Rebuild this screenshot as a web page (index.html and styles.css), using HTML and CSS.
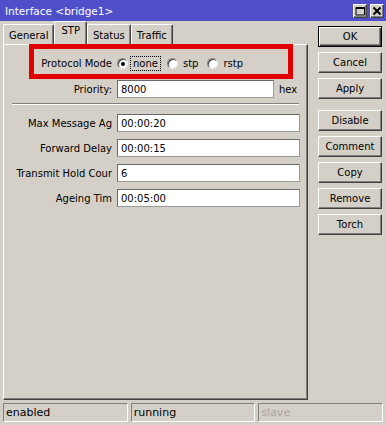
FILE: index.html
```html
<!DOCTYPE html>
<html lang="en">
<head>
  <meta charset="UTF-8" />
  <title>Interface &lt;bridge1&gt;</title>
  <link rel="stylesheet" href="styles.css">
</head>
<body>
  <div class="window">
    <div class="titlebar">
      <span class="title">Interface &lt;bridge1&gt;</span>
      <div class="title-btns">
        <span class="tbtn">
          <svg width="12" height="12" viewBox="0 0 12 12"><path d="M2 2.5h8.5v7.5h-8.5z" fill="none" stroke="#000" stroke-width="1"/><path d="M2 2h9v2h-9z" fill="#000"/></svg>
        </span>
        <span class="tbtn">
          <svg width="12" height="12" viewBox="0 0 12 12"><path d="M2.5 2.5l7 7M9.5 2.5l-7 7" stroke="#000" stroke-width="2"/></svg>
        </span>
      </div>
    </div>

    <div class="content">
      <div class="main">
        <div class="tabs">
          <div class="tab">General</div>
          <div class="tab active">STP</div>
          <div class="tab">Status</div>
          <div class="tab">Traffic</div>
        </div>

        <div class="panel">
          <div class="form">
            <label class="lbl">Protocol Mode</label>
            <div class="radios">
              <span class="radio checked"></span><span class="radio-text focused">none</span>
              <span class="radio"></span><span class="radio-text">stp</span>
              <span class="radio"></span><span class="radio-text">rstp</span>
            </div>
            <label class="lbl">Priority:</label>
            <div class="field-row">
              <input class="field short" value="8000">
              <span class="unit">hex</span>
            </div>
          </div>

          <div class="sep"></div>

          <div class="form">
            <label class="lbl">Max Message Ag</label>
            <input class="field" value="00:00:20">
            <label class="lbl">Forward Delay</label>
            <input class="field" value="00:00:15">
            <label class="lbl">Transmit Hold Cour</label>
            <input class="field" value="6">
            <label class="lbl">Ageing Tim</label>
            <input class="field" value="00:05:00">
          </div>
        </div>
      </div>

      <div class="side">
        <button class="btn default">OK</button>
        <button class="btn">Cancel</button>
        <button class="btn">Apply</button>
        <button class="btn spaced">Disable</button>
        <button class="btn">Comment</button>
        <button class="btn">Copy</button>
        <button class="btn">Remove</button>
        <button class="btn">Torch</button>
      </div>
    </div>

    <div class="statusbar">
      <div class="cell">enabled</div>
      <div class="cell">running</div>
      <div class="cell dim">slave</div>
    </div>

    <!-- annotation box -->
    <div class="highlight"></div>
  </div>
</body>
</html>
```

FILE: styles.css
```css
body {
  margin: 0;
  font-family: "DejaVu Sans", sans-serif;
  font-size: 10px;
  color: #000;
  background-color: #d4d0c8;
}

.window {
  position: relative;
  width: 386px;
  height: 425px;
  overflow: hidden;
  background-color: #d4d0c8;
}

.titlebar {
  height: 21px;
  background-color: #4f4fca;
  color: white;
  display: flex;
  align-items: center;
  justify-content: space-between;
  padding-left: 5px;
  padding-right: 2px;
  box-sizing: border-box;
}

.title {
  font-size: 10.5px;
}

.title-btns {
  display: flex;
  gap: 3px;
}

.tbtn {
  width: 14px;
  height: 14px;
  box-sizing: border-box;
  background-color: #d4d0c8;
  border: 1px solid;
  border-color: #fff #404040 #404040 #fff;
  box-shadow: inset -1px -1px 0 #808080;
  display: flex;
  align-items: center;
  justify-content: center;
}

.content {
  display: flex;
  height: 379px;
  padding-left: 3px;
}

.main {
  width: 305px;
  display: flex;
  flex-direction: column;
}

.tabs {
  display: flex;
  align-items: flex-end;
  height: 23px;
}

.tab {
  height: 20px;
  line-height: 20px;
  padding: 0 5px;
  box-sizing: border-box;
  border-top: 1px solid #fff;
  border-left: 1px solid #fff;
  border-right: 1px solid #404040;
  box-shadow: inset -1px 0 0 #808080;
  border-radius: 2px 2px 0 0;
  padding-top: 1px;
}

.tab.active {
  height: 24px;
  line-height: 18px;
  padding: 0 6px;
  margin-bottom: -1px;
  position: relative;
  z-index: 1;
  background-color: #d4d0c8;
}

.panel {
  flex: 1;
  border: 1px solid;
  border-color: #fff #404040 #404040 #fff;
  box-shadow: inset -1px -1px 0 #808080;
  padding-top: 9px;
}

.form {
  display: grid;
  grid-template-columns: 108px auto;
  column-gap: 5px;
  row-gap: 7px;
  align-items: center;
}

.form:first-child {
  row-gap: 8px;
}

.lbl {
  text-align: right;
  white-space: nowrap;
  overflow: hidden;
}

.radios {
  display: flex;
  align-items: center;
  height: 18px;
}

.radio {
  width: 11px;
  height: 11px;
  box-sizing: border-box;
  border-radius: 50%;
  background-color: #fff;
  border: 1px solid;
  border-color: #808080 #e8e8e8 #e8e8e8 #808080;
  box-shadow: inset 1px 1px 0 #404040;
  position: relative;
  margin-right: 2px;
}

.radio.checked::after {
  content: "";
  position: absolute;
  left: 3px;
  top: 3px;
  width: 4px;
  height: 4px;
  border-radius: 50%;
  background-color: #000;
}

.radio-text {
  padding: 1px 2px;
  border: 1px solid transparent;
  margin-right: 6px;
}

.radio-text.focused {
  border: 1px dotted #000;
}

.field-row {
  display: flex;
  align-items: center;
}

.field {
  width: 183px;
  height: 18px;
  box-sizing: border-box;
  border: 1px solid;
  border-color: #6a6a6a #9a9a9a #9a9a9a #6a6a6a;
  background-color: #fff;
  font-family: "DejaVu Sans", sans-serif;
  font-size: 10px;
  color: #000;
  padding: 0 3px;
  margin: 0;
  outline: none;
}

.field.short {
  width: 157px;
}

.unit {
  margin-left: 5px;
}

.sep {
  margin: 5px 8px 9px 8px;
  border-top: 1px solid #808080;
  border-bottom: 1px solid #fff;
}

.side {
  width: 64px;
  margin-left: 10px;
  padding-top: 5px;
  display: flex;
  flex-direction: column;
  gap: 5px;
}

.btn {
  height: 21px;
  box-sizing: border-box;
  background-color: #d4d0c8;
  border: 1px solid;
  border-color: #fff #404040 #404040 #fff;
  box-shadow: inset -1px -1px 0 #808080;
  font-family: "DejaVu Sans", sans-serif;
  font-size: 10px;
  color: #000;
  padding: 0;
  margin: 0;
}

.btn.default {
  border-color: #000;
  box-shadow: inset 1px 1px 0 #fff, inset -1px -1px 0 #404040, inset -2px -2px 0 #808080;
}

.btn.spaced {
  margin-top: 6px;
}

.statusbar {
  display: flex;
  gap: 3px;
  margin-top: 3px;
  padding: 0 3px;
}

.cell {
  flex: 1;
  height: 19px;
  line-height: 17px;
  box-sizing: border-box;
  border: 1px solid;
  border-color: #808080 #fff #fff #808080;
  padding-left: 2px;
  font-size: 11px;
}

.cell.dim {
  color: #a8a49c;
}

.highlight {
  position: absolute;
  left: 29px;
  top: 44px;
  width: 264px;
  height: 35px;
  box-sizing: border-box;
  border: 5px solid #e10000;
  z-index: 5;
}
```
